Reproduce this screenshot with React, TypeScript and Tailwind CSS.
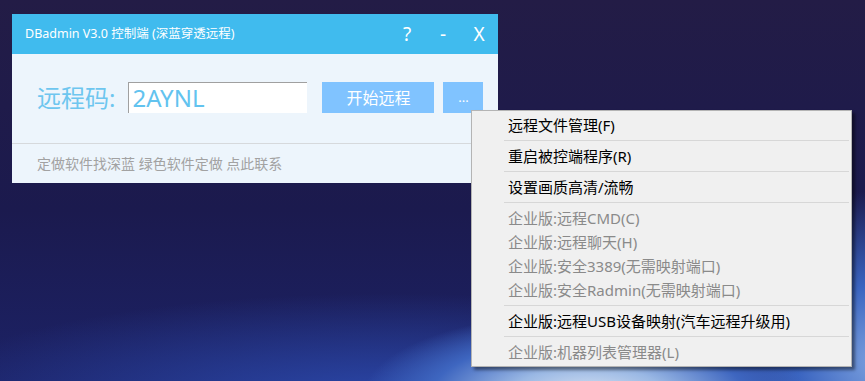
import React from 'react';

type MenuEntry =
  | { kind: 'item'; label: string; disabled?: boolean }
  | { kind: 'sep' };

const menu: MenuEntry[] = [
  { kind: 'item', label: '远程文件管理(F)' },
  { kind: 'sep' },
  { kind: 'item', label: '重启被控端程序(R)' },
  { kind: 'sep' },
  { kind: 'item', label: '设置画质高清/流畅' },
  { kind: 'sep' },
  { kind: 'item', label: '企业版:远程CMD(C)', disabled: true },
  { kind: 'item', label: '企业版:远程聊天(H)', disabled: true },
  { kind: 'item', label: '企业版:安全3389(无需映射端口)', disabled: true },
  { kind: 'item', label: '企业版:安全Radmin(无需映射端口)', disabled: true },
  { kind: 'sep' },
  { kind: 'item', label: '企业版:远程USB设备映射(汽车远程升级用)' },
  { kind: 'sep' },
  { kind: 'item', label: '企业版:机器列表管理器(L)', disabled: true },
];

function ContextMenu() {
  return (
    <div className="absolute left-[471px] top-[110px] w-[381px] h-[257px] bg-[#f0f0f0] border border-[#b4b4b4] py-[2px] shadow-[3px_3px_3px_rgba(0,0,0,0.45)]">
      {menu.map((entry, i) =>
        entry.kind === 'sep' ? (
          <div key={i} className="h-[7px] flex items-center pl-[32px] pr-[2px]">
            <div className="h-px w-full bg-[#d7d7d7]" />
          </div>
        ) : (
          <div
            key={i}
            className={`h-[24px] flex items-center pl-[36px] text-[15px] leading-none whitespace-nowrap ${
              entry.disabled ? 'text-[#8a8a8a]' : 'text-black'
            }`}
          >
            {entry.label}
          </div>
        )
      )}
    </div>
  );
}

export default function App() {
  return (
    <div
      className="relative w-[865px] h-[381px] overflow-hidden pt-[14px] pl-[12px] bg-[radial-gradient(ellipse_26%_22%_at_68%_104%,#dce6f4_0%,#9ab8e4_35%,#3e66c0_70%,transparent_100%),radial-gradient(ellipse_22%_45%_at_102%_95%,#7fa4e0_0%,#3a64c0_45%,transparent_100%),radial-gradient(ellipse_55%_28%_at_45%_105%,#2b48aa_0%,transparent_100%),linear-gradient(180deg,#231c46_0%,#1b1a4e_55%,#1c2266_100%)]"
      style={{ fontFamily: '"Noto Sans", "Noto Sans CJK SC", sans-serif' }}
    >
      {/* Main window */}
      <div className="w-[486px] h-[169px] flex flex-col bg-[#edf5fc]">
        {/* Title bar */}
        <div className="h-[40px] shrink-0 flex items-center bg-[#40bbee] text-white">
          <div className="pl-[13px] text-[12.5px] flex-1">DBadmin V3.0 控制端 (深蓝穿透远程)</div>
          <div className="flex items-center pr-[1px] text-[19px] leading-none">
            <span className="w-[36px] text-center">?</span>
            <span className="w-[36px] text-center">-</span>
            <span className="w-[36px] text-center">X</span>
          </div>
        </div>

        {/* Body */}
        <div className="h-[90px] shrink-0 flex items-start pt-[28px] pl-[25px] border-b border-[#d6d9dc]">
          <span className="text-[24px] leading-[31px] text-[#6ec6ef]">远程码:</span>
          <div className="ml-[13px] w-[179px] h-[31px] bg-white border-t border-l border-[#a0a0a0] flex items-center pl-[3px] text-[24px] leading-none text-[#62c3ef]">
            2AYNL
          </div>
          <div className="ml-[15px] w-[112px] h-[31px] bg-[#80c3ff] flex items-center justify-center text-white text-[16px]">
            开始远程
          </div>
          <div className="ml-[9px] w-[40px] h-[31px] bg-[#80c3ff] flex items-center justify-center text-white text-[13px]">
            ...
          </div>
        </div>

        {/* Footer */}
        <div className="flex-1 flex items-center pl-[25px] text-[14px] text-[#a2a2a2]">
          定做软件找深蓝 绿色软件定做 点此联系
        </div>
      </div>

      <ContextMenu />
    </div>
  );
}
